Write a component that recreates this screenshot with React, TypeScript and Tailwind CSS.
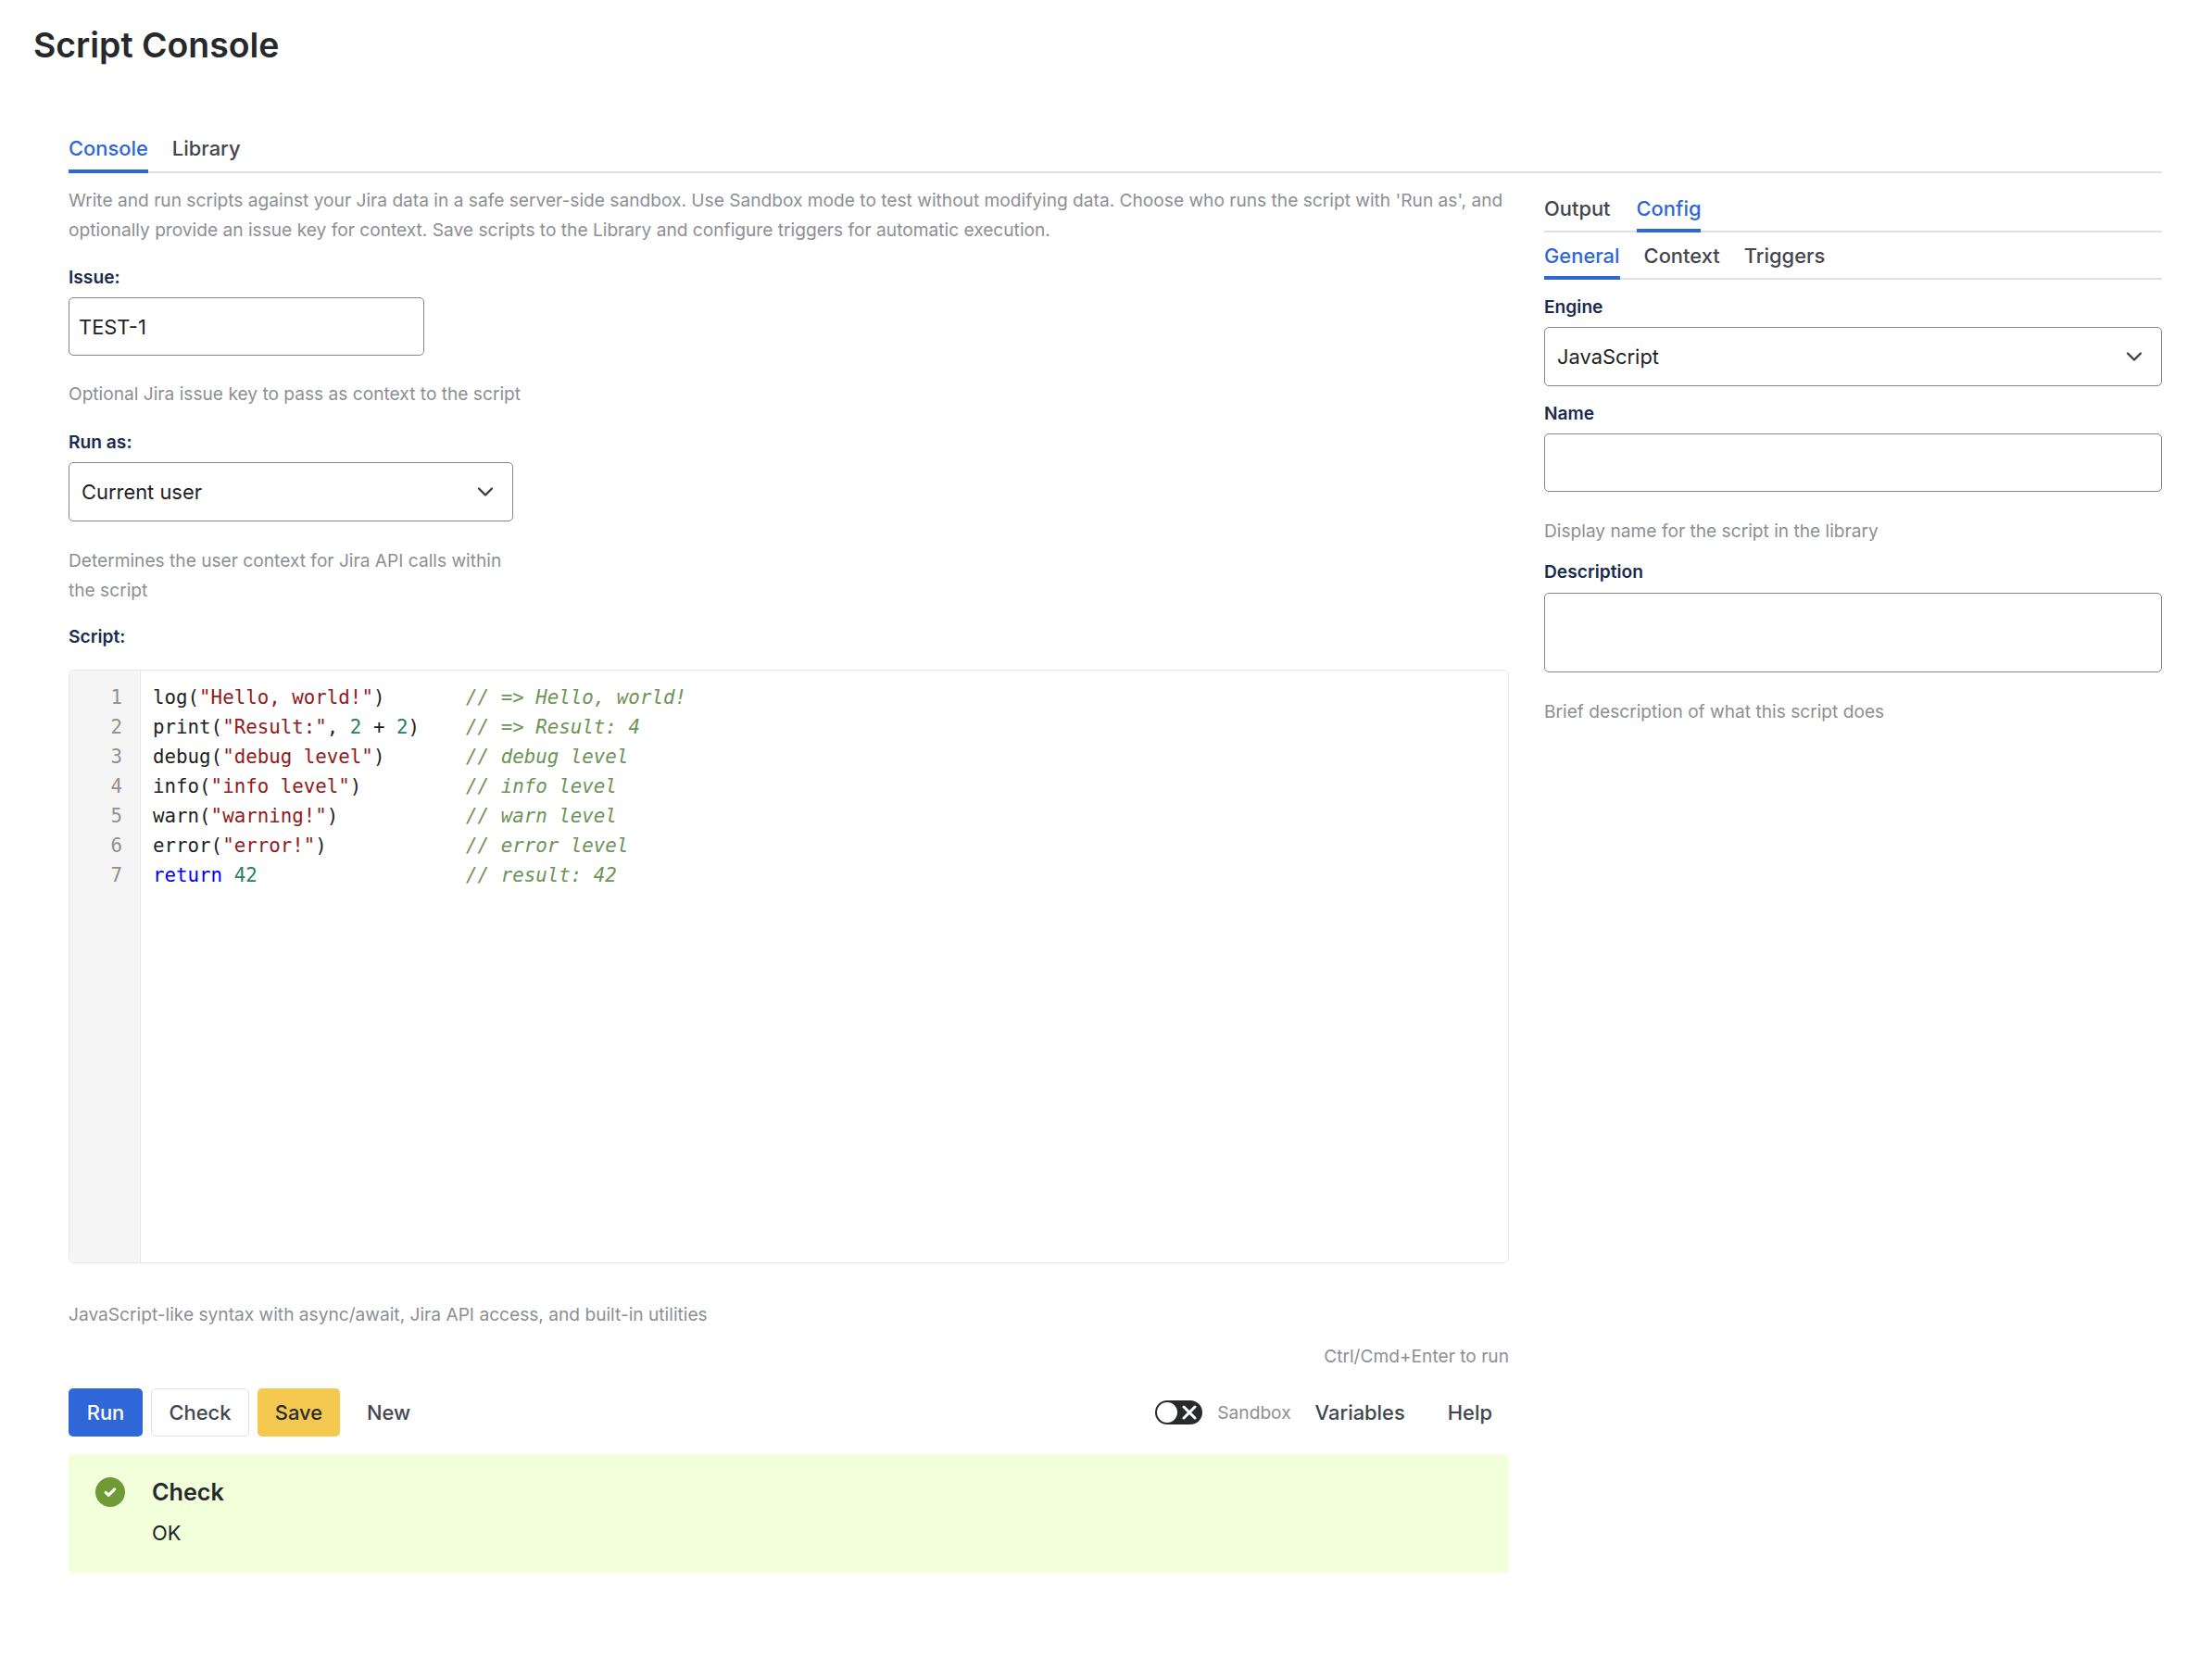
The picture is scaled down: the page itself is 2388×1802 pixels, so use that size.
import { ChevronDown, X } from "lucide-react"

const inter = { fontFamily: "Inter, sans-serif" }

function Tab({ label, active, pad = "pb-[6px]" }: { label: string; active?: boolean; pad?: string }) {
  return (
    <div
      className={`-mb-[2px] border-b-4 text-[21.9px] leading-[32px] font-medium ${pad} ${
        active ? "border-[#2f66d8] text-[#2f66d8]" : "border-transparent text-[#44464e]"
      }`}
    >
      {label}
    </div>
  )
}

function Label({ children, className = "mb-[9px]" }: { children: string; className?: string }) {
  return <div className={`text-[19.2px] leading-[26px] font-semibold text-[#1a2b4d] ${className}`}>{children}</div>
}

function Help({ children, className = "" }: { children: string; className?: string }) {
  return <p className={`text-[19.15px] leading-[32px] text-[#8c8f94] ${className}`}>{children}</p>
}

function SelectBox({ value, className = "" }: { value: string; className?: string }) {
  return (
    <div className={`flex h-[64px] items-center justify-between rounded-[5px] border border-[#85878c] pl-[13px] pr-[15px] text-[21.9px] text-[#1d1f24] ${className}`}>
      <span className="pt-px">{value}</span>
      <ChevronDown size={28} strokeWidth={2} className="text-[#3b3d42]" />
    </div>
  )
}

const S = ({ children }: { children: string }) => <span className="text-[#931a1a]">{children}</span>
const N = ({ children }: { children: string }) => <span className="text-[#2a7d5f]">{children}</span>
const C = ({ children }: { children: string }) => <span className="italic text-[#6b9455]">{children}</span>

function CodeEditor() {
  return (
    <div className="flex h-[641px] overflow-hidden rounded-[6px] border border-[#e6e6e8]">
      <div className="w-[77px] shrink-0 border-r border-[#e6e6e8] bg-[#f5f5f5] pt-[13px] pr-[19px] text-right text-[#8f9092]">
        {[1, 2, 3, 4, 5, 6, 7].map((n) => (
          <div key={n} className="h-[32px] font-['DejaVu_Sans_Mono',monospace] text-[20.8px] leading-[32px]">
            {n}
          </div>
        ))}
      </div>
      <pre className="flex-1 pt-[13px] pl-[13px] font-['DejaVu_Sans_Mono',monospace] text-[20.8px] leading-[32px] text-[#1d1f24]">
        <div>log(<S>"Hello, world!"</S>)       <C>{"// => Hello, world!"}</C></div>
        <div>print(<S>"Result:"</S>, <N>2</N> + <N>2</N>)    <C>{"// => Result: 4"}</C></div>
        <div>debug(<S>"debug level"</S>)       <C>{"// debug level"}</C></div>
        <div>info(<S>"info level"</S>)         <C>{"// info level"}</C></div>
        <div>warn(<S>"warning!"</S>)           <C>{"// warn level"}</C></div>
        <div>error(<S>"error!"</S>)            <C>{"// error level"}</C></div>
        <div><span className="text-[#0000ff]">return</span> <N>42</N>                  <C>{"// result: 42"}</C></div>
      </pre>
    </div>
  )
}

export default function App() {
  return (
    <div style={inter} className="min-h-screen bg-white pt-[25px] pr-[54px] pl-[36px] text-[#1d1f24]">
      <h1 className="text-[37.4px] leading-[48px] font-semibold text-[#26282c]">Script Console</h1>

      <div className="mt-[71px] ml-[38px]">
        {/* Top tabs */}
        <div className="flex gap-[26px] border-b-2 border-[#dfe0e2]">
          <Tab label="Console" active pad="pb-[7px]" />
          <Tab label="Library" pad="pb-[7px]" />
        </div>

        <div className="flex gap-[38px]">
          {/* Left column */}
          <div className="w-[1555px] shrink-0 pt-[13px]">
            <Help>
              Write and run scripts against your Jira data in a safe server-side sandbox. Use Sandbox mode to test without modifying data. Choose who runs the script with 'Run as', and optionally provide an issue key for context. Save scripts to the Library and configure triggers for automatic execution.
            </Help>

            <Label className="mt-[22px] mb-[9px]">Issue:</Label>
            <input
              readOnly
              value="TEST-1"
              className="block h-[63px] w-[384px] rounded-[5px] border border-[#85878c] px-[10px] text-[21.9px] text-[#1d1f24] outline-none"
            />
            <Help className="mt-[25px]">Optional Jira issue key to pass as context to the script</Help>

            <Label className="mt-[23px] mb-[9px]">Run as:</Label>
            <SelectBox value="Current user" className="w-[480px]" />
            <Help className="mt-[26px] w-[480px]">Determines the user context for Jira API calls within the script</Help>

            <Label className="mt-[21px] mb-[23px]">Script:</Label>
            <CodeEditor />

            <Help className="mt-[39px]">JavaScript-like syntax with async/await, Jira API access, and built-in utilities</Help>
            <Help className="mt-[13px] text-right">Ctrl/Cmd+Enter to run</Help>

            {/* Toolbar */}
            <div className="mt-[19px] flex items-center justify-between">
              <div className="flex gap-[9px] text-[21.9px] font-medium">
                <button className="h-[52px] w-[80px] rounded-[5px] bg-[#2f66d8] text-white">Run</button>
                <button className="h-[52px] w-[106px] rounded-[5px] border border-[#dfe0e2] text-[#44464e]">Check</button>
                <button className="h-[52px] w-[89px] rounded-[5px] bg-[#f5c94f] text-[#2b2c30]">Save</button>
                <button className="h-[52px] px-[20px] text-[#44464e]">New</button>
              </div>
              <div className="flex items-center text-[21.9px] font-medium text-[#44464e]">
                <div className="flex h-[26px] w-[51px] items-center justify-between rounded-full bg-[#292a2e] pr-[2px] pl-[2px]">
                  <span className="h-[22px] w-[22px] shrink-0 rounded-full bg-white" />
                  <X size={24} strokeWidth={3} className="shrink-0 text-white" />
                </div>
                <span className="ml-[16px] text-[19.15px] font-normal text-[#8c8f94]">Sandbox</span>
                <button className="ml-[6px] h-[52px] px-[20px]">Variables</button>
                <button className="ml-[6px] h-[52px] pr-[18px] pl-[20px]">Help</button>
              </div>
            </div>

            {/* Result */}
            <div className="mt-[19px] flex h-[128px] rounded-[5px] bg-[#f1ffdb] pt-[25px] pl-[29px]">
              <svg width="32" height="32" viewBox="0 0 32 32" className="shrink-0">
                <circle cx="16" cy="16" r="16" fill="#6f9a35" />
                <path d="M11.2 16.4l3 2.9 6.5-6.4" fill="none" stroke="#fff" strokeWidth="3.2" strokeLinecap="round" strokeLinejoin="round" />
              </svg>
              <div className="ml-[29px]">
                <div className="-mt-[2px] text-[25.2px] leading-[36px] font-semibold text-[#26282c]">Check</div>
                <div className="mt-[10px] text-[21.9px] leading-[32px]">OK</div>
              </div>
            </div>
          </div>

          {/* Right column */}
          <div className="flex-1 pt-[22px]">
            <div className="flex gap-[28px] border-b-2 border-[#dfe0e2]">
              <Tab label="Output" />
              <Tab label="Config" active />
            </div>
            <div className="mt-[9px] flex gap-[26px] border-b-2 border-[#dfe0e2]">
              <Tab label="General" active />
              <Tab label="Context" />
              <Tab label="Triggers" />
            </div>

            <Label className="mt-[16px] mb-[9px]">Engine</Label>
            <SelectBox value="JavaScript" />

            <Label className="mt-[16px] mb-[9px]">Name</Label>
            <input readOnly className="block h-[63px] w-full rounded-[5px] border border-[#85878c] outline-none" />
            <Help className="mt-[26px]">Display name for the script in the library</Help>

            <Label className="mt-[15px] mb-[10px]">Description</Label>
            <textarea readOnly className="block h-[86px] w-full resize-none rounded-[5px] border border-[#85878c] outline-none" />
            <Help className="mt-[26px]">Brief description of what this script does</Help>
          </div>
        </div>
      </div>
    </div>
  )
}
